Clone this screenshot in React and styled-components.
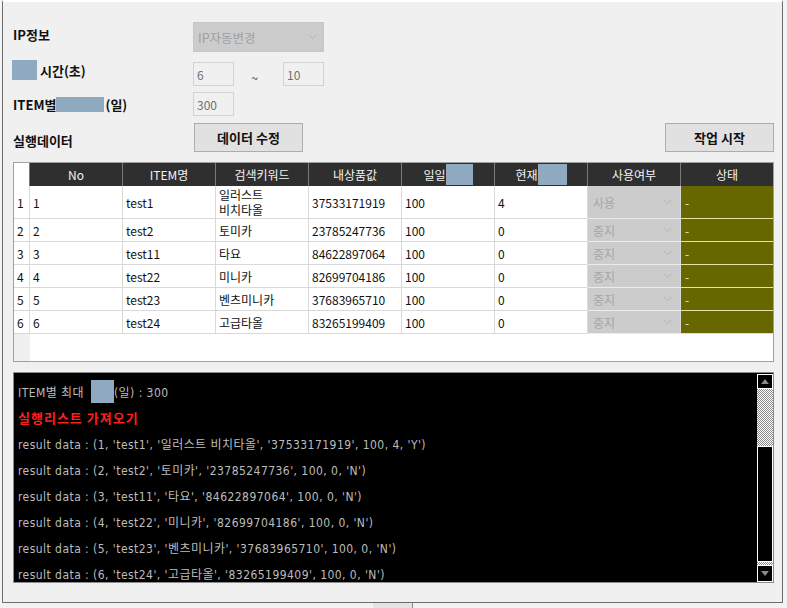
import React from "react";
import styled, { createGlobalStyle } from "styled-components";

const GlobalStyle = createGlobalStyle`
  html, body {
    margin: 0;
    padding: 0;
    background: #f4f4f4;
  }
  body {
    font-family: "Noto Sans CJK KR", "Noto Sans", sans-serif;
    overflow: hidden;
  }
`;

const Page = styled.div`
  width: 787px;
  height: 608px;
  display: flex;
  flex-direction: column;
`;

const Window = styled.div`
  margin-left: 2px;
  width: 781px;
  height: 603px;
  box-sizing: border-box;
  background: #f0f0f0;
  border-top: 2px solid #ffffff;
  border-left: 1px solid #6d6d6d;
  border-right: 1px solid #6d6d6d;
  border-bottom: 1px solid #6d6d6d;
  padding: 20px 8px 0 10px;
  display: flex;
  flex-direction: column;
`;

const FormRow = styled.div`
  display: flex;
  align-items: center;
  height: ${(p) => p.$h}px;
  margin-top: ${(p) => p.$mt}px;
`;

const Label = styled.div`
  width: 180px;
  flex: none;
  display: flex;
  align-items: center;
  font-size: 13px;
  font-weight: 700;
  color: #111;
  margin-top: ${(p) => (p.$up < 0 ? -p.$up * 2 : 0)}px;
  margin-bottom: ${(p) => (p.$up > 0 ? p.$up * 2 : 0)}px;
  white-space: nowrap;
`;

const Mask = styled.span`
  display: inline-block;
  width: ${(p) => p.$w}px;
  height: ${(p) => p.$h}px;
  background: #8fa9c1;
  margin-left: ${(p) => p.$ml || 0}px;
  margin-right: ${(p) => p.$mr || 0}px;
  vertical-align: middle;
`;

const Combo = styled.div`
  width: 131px;
  height: 100%;
  box-sizing: border-box;
  background: #cccccc;
  border: 1px solid #c6c6c6;
  display: flex;
  align-items: center;
  justify-content: space-between;
  padding: 0 6px 0 4px;
  font-size: 12.5px;
  color: #a0a0a0;
`;

const Chevron = () => (
  <svg width="9" height="6" viewBox="0 0 9 6">
    <path d="M1 1 L4.5 4.5 L8 1" fill="none" stroke="#b4b4b4" strokeWidth="1" />
  </svg>
);

const TextBox = styled.div`
  width: 41px;
  height: 100%;
  box-sizing: border-box;
  border: 1px solid #d2d2d2;
  background: #f0f0f0;
  font-size: 12px;
  color: #707070;
  display: flex;
  align-items: center;
  padding-left: 3px;
`;

const Tilde = styled.div`
  width: 49px;
  text-align: center;
  font-size: 12px;
  color: #333;
  padding-top: 6px;
  padding-right: 8px;
  box-sizing: border-box;
`;

const Button = styled.button`
  width: 109px;
  height: 100%;
  margin-left: ${(p) => p.$ml || 0}px;
  background: #e1e1e1;
  border: 1px solid #adadad;
  font-family: "Noto Sans CJK KR", sans-serif;
  font-size: 13px;
  font-weight: 700;
  color: #111;
  padding: 0;
`;

const Spacer = styled.div`
  flex: 1;
`;

const GridBox = styled.div`
  margin-top: 10px;
  height: 200px;
  box-sizing: border-box;
  border: 1px solid #a0a0a0;
  background: linear-gradient(to right, #f0f0f0 16px, #ffffff 16px);
  display: grid;
  grid-template-columns: 15px 93px repeat(7, 93px);
  grid-auto-rows: min-content;
  align-content: start;
  font-size: 12px;
  overflow: hidden;
`;

const Corner = styled.div`
  height: 23px;
  background: #ffffff;
`;

const HeadCell = styled.div`
  height: 23px;
  box-sizing: border-box;
  background: #2f2f2f;
  border-left: 1px solid #7a7a7a;
  color: #f4f4f4;
  display: flex;
  align-items: center;
  justify-content: center;
  white-space: nowrap;
`;

const Cell = styled.div`
  height: ${(p) => p.$h}px;
  box-sizing: border-box;
  background: #ffffff;
  border-bottom: 1px solid #d9d9d9;
  border-left: ${(p) => (p.$first ? "none" : "1px solid #d9d9d9")};
  color: #111;
  display: flex;
  align-items: center;
  padding-left: 3px;
  line-height: 15px;
  white-space: pre;
`;

const UseCell = styled(Cell)`
  background: #cccccc;
  color: #a6a6a6;
  border-bottom: 1px solid #ececec;
  justify-content: space-between;
  padding: 0 8px 0 5px;
`;

const StatusCell = styled(Cell)`
  background: #676700;
  color: #e8e8d0;
  border-left: 1px solid #d9d9d9;
  border-bottom: 1px solid #e4e4a8;
  padding-left: 4px;
`;

const LogBox = styled.div`
  margin-top: 10px;
  height: 211px;
  box-sizing: border-box;
  border: 1px solid #8c8c8c;
  background: #000000;
  display: flex;
`;

const LogText = styled.div`
  flex: 1;
  padding: 5px 0 0 4px;
  overflow: hidden;
  font-family: "DejaVu Sans Condensed", "Noto Sans CJK KR", sans-serif;
  font-stretch: condensed;
  font-size: 12px;
  letter-spacing: 0.45px;
  color: #bcbcbc;
`;

const LogLine = styled.div`
  height: 26px;
  display: flex;
  align-items: center;
  white-space: pre;
  color: ${(p) => (p.$red ? "#ff1e1e" : "#bcbcbc")};
  font-weight: ${(p) => (p.$red ? 700 : 400)};
  font-size: ${(p) => (p.$red ? 13 : 12)}px;
  letter-spacing: ${(p) => (p.$red ? "1px" : "inherit")};
  font-family: ${(p) =>
    p.$red ? '"Noto Sans CJK KR", sans-serif' : "inherit"};
`;

const ScrollBar = styled.div`
  width: 16px;
  padding-top: 1px;
  display: flex;
  flex-direction: column;
`;

const ArrowBtn = styled.div`
  height: ${(p) => p.$h}px;
  box-sizing: border-box;
  border: 1px solid #ffffff;
  background: #000;
  display: flex;
  align-items: center;
  justify-content: center;
`;

const Thumb = styled.div`
  height: 57px;
  background: repeating-conic-gradient(#ffffff 0 25%, #8a8a8a 0 50%) 0 0 / 2px 2px;
`;

const Track = styled.div`
  flex: 1;
  box-sizing: border-box;
  border: 1px solid #ffffff;
  background: #000;
`;

const Dither = styled.div`
  height: 3px;
  background: repeating-conic-gradient(#ffffff 0 25%, #8a8a8a 0 50%) 0 0 / 2px 2px;
`;

const BottomStrip = styled.div`
  height: 5px;
  display: flex;
`;

const StripPart = styled.div`
  width: ${(p) => p.$w}px;
  flex: ${(p) => (p.$w ? "none" : 1)};
  background: ${(p) => p.$bg};
  border-right: ${(p) => (p.$line ? "1px solid #8a8a8a" : "none")};
`;

const rows = [
  ["1", "test1", "일러스트\n비치타올", "37533171919", "100", "4", "사용"],
  ["2", "test2", "토미카", "23785247736", "100", "0", "중지"],
  ["3", "test11", "타요", "84622897064", "100", "0", "중지"],
  ["4", "test22", "미니카", "82699704186", "100", "0", "중지"],
  ["5", "test23", "벤츠미니카", "37683965710", "100", "0", "중지"],
  ["6", "test24", "고급타올", "83265199409", "100", "0", "중지"],
];

const logs = [
  "(1, 'test1', '일러스트 비치타올', '37533171919', 100, 4, 'Y')",
  "(2, 'test2', '토미카', '23785247736', 100, 0, 'N')",
  "(3, 'test11', '타요', '84622897064', 100, 0, 'N')",
  "(4, 'test22', '미니카', '82699704186', 100, 0, 'N')",
  "(5, 'test23', '벤츠미니카', '37683965710', 100, 0, 'N')",
  "(6, 'test24', '고급타올', '83265199409', 100, 0, 'N')",
];

export default function App() {
  return (
    <Page>
      <GlobalStyle />
      <Window>
        <FormRow $h={30} $mt={0}>
          <Label $up={3}>IP정보</Label>
          <Combo>
            IP자동변경
            <Chevron />
          </Combo>
        </FormRow>
        <FormRow $h={24} $mt={10}>
          <Label $up={4}>
            <Mask $w={25} $h={20} $ml={-1} $mr={3} />
            시간(초)
          </Label>
          <TextBox>6</TextBox>
          <Tilde>~</Tilde>
          <TextBox>10</TextBox>
        </FormRow>
        <FormRow $h={24} $mt={6}>
          <Label $up={0}>
            ITEM별
            <Mask $w={48} $h={15} $mr={1} />
            (일)
          </Label>
          <TextBox>300</TextBox>
        </FormRow>
        <FormRow $h={29} $mt={7}>
          <Label $up={-3}>실행데이터</Label>
          <Button $ml={1}>데이터 수정</Button>
          <Spacer />
          <Button>작업 시작</Button>
        </FormRow>

        <GridBox>
          <Corner />
          <HeadCell>No</HeadCell>
          <HeadCell>ITEM명</HeadCell>
          <HeadCell>검색키워드</HeadCell>
          <HeadCell>내상품값</HeadCell>
          <HeadCell>
            일일
            <Mask $w={27} $h={21} />
          </HeadCell>
          <HeadCell>
            현재
            <Mask $w={29} $h={21} />
          </HeadCell>
          <HeadCell>사용여부</HeadCell>
          <HeadCell>상태</HeadCell>
          {rows.map((r, i) => {
            const h = i === 0 ? 33 : 23;
            return (
              <React.Fragment key={r[0]}>
                <Cell $h={h} $first>
                  {r[0]}
                </Cell>
                {r.slice(0, 6).map((v, j) => (
                  <Cell key={j} $h={h}>
                    {v}
                  </Cell>
                ))}
                <UseCell $h={h}>
                  {r[6]}
                  <Chevron />
                </UseCell>
                <StatusCell $h={h}>-</StatusCell>
              </React.Fragment>
            );
          })}
        </GridBox>

        <LogBox>
          <LogText>
            <LogLine>
              ITEM별 최대 <Mask $w={23} $h={23} $ml={3} />
              (일) : 300
            </LogLine>
            <LogLine $red>실행리스트 가져오기</LogLine>
            {logs.map((l) => (
              <LogLine key={l}>result data : {l}</LogLine>
            ))}
          </LogText>
          <ScrollBar>
            <ArrowBtn $h={15}>
              <svg width="8" height="5" viewBox="0 0 8 5">
                <path d="M0 5 L4 0 L8 5 Z" fill="#8a8a8a" />
              </svg>
            </ArrowBtn>
            <Thumb />
            <Track />
            <Dither />
            <ArrowBtn $h={17}>
              <svg width="8" height="5" viewBox="0 0 8 5">
                <path d="M0 0 L4 5 L8 0 Z" fill="#8a8a8a" />
              </svg>
            </ArrowBtn>
          </ScrollBar>
        </LogBox>
      </Window>
      <BottomStrip>
        <StripPart $w={373} $bg="#f2f2f2" />
        <StripPart $w={39} $bg="#e4e4e4" $line />
        <StripPart $bg="#f2f2f2" />
      </BottomStrip>
    </Page>
  );
}
